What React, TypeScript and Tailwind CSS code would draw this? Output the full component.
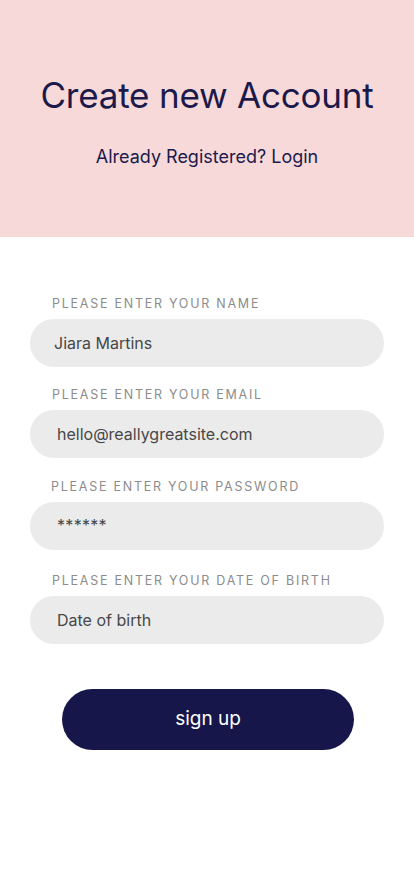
import React from "react";

const font = { fontFamily: "Inter, 'Noto Sans', sans-serif" };

function Field({ label, value, mt, lx, tx }: { label: string; value: string; mt: string; lx: string; tx: string }) {
  return (
    <div className={mt}>
      <div className={`h-4 leading-4 text-[12.5px] tracking-[1.75px] text-[#8c8c8c] ${lx}`}>{label}</div>
      <div className={`mt-[7px] mx-[30px] h-[48px] rounded-full bg-[#ebebeb] flex items-center text-[16px] text-[#474747] ${tx}`}>{value}</div>
    </div>
  );
}

export default function App() {
  return (
    <div className="w-[414px] min-h-[896px] bg-white" style={font}>
      <div className="h-[237px] bg-[#f8d9d9] flex flex-col items-center">
        <h1 className="mt-[73px] text-[35px] leading-[44px] text-[#1b1a4b] tracking-[-0.2px]">Create new Account</h1>
        <p className="mt-[28px] text-[18px] leading-[24px] text-[#1b1a4b]">Already Registered? Login</p>
      </div>
      <div className="pt-[59px]">
        <Field label="PLEASE ENTER YOUR NAME" value="Jiara Martins" mt="" lx="pl-[52px]" tx="pl-[24px]" />
        <Field label="PLEASE ENTER YOUR EMAIL" value="hello@reallygreatsite.com" mt="mt-[20px]" lx="pl-[52px]" tx="pl-[27px]" />
        <Field label="PLEASE ENTER YOUR PASSWORD" value="******" mt="mt-[21px]" lx="pl-[51px]" tx="pl-[27px] text-[13px] tracking-[0.3px] pb-[3px]" />
        <Field label="PLEASE ENTER YOUR DATE OF BIRTH" value="Date of birth" mt="mt-[23px]" lx="pl-[52px]" tx="pl-[27px]" />
        <div className="mt-[45px] flex justify-center">
          <button className="w-[292px] h-[61px] rounded-full bg-[#16164a] text-white text-[19px] ml-[2px]">sign up</button>
        </div>
      </div>
    </div>
  );
}
